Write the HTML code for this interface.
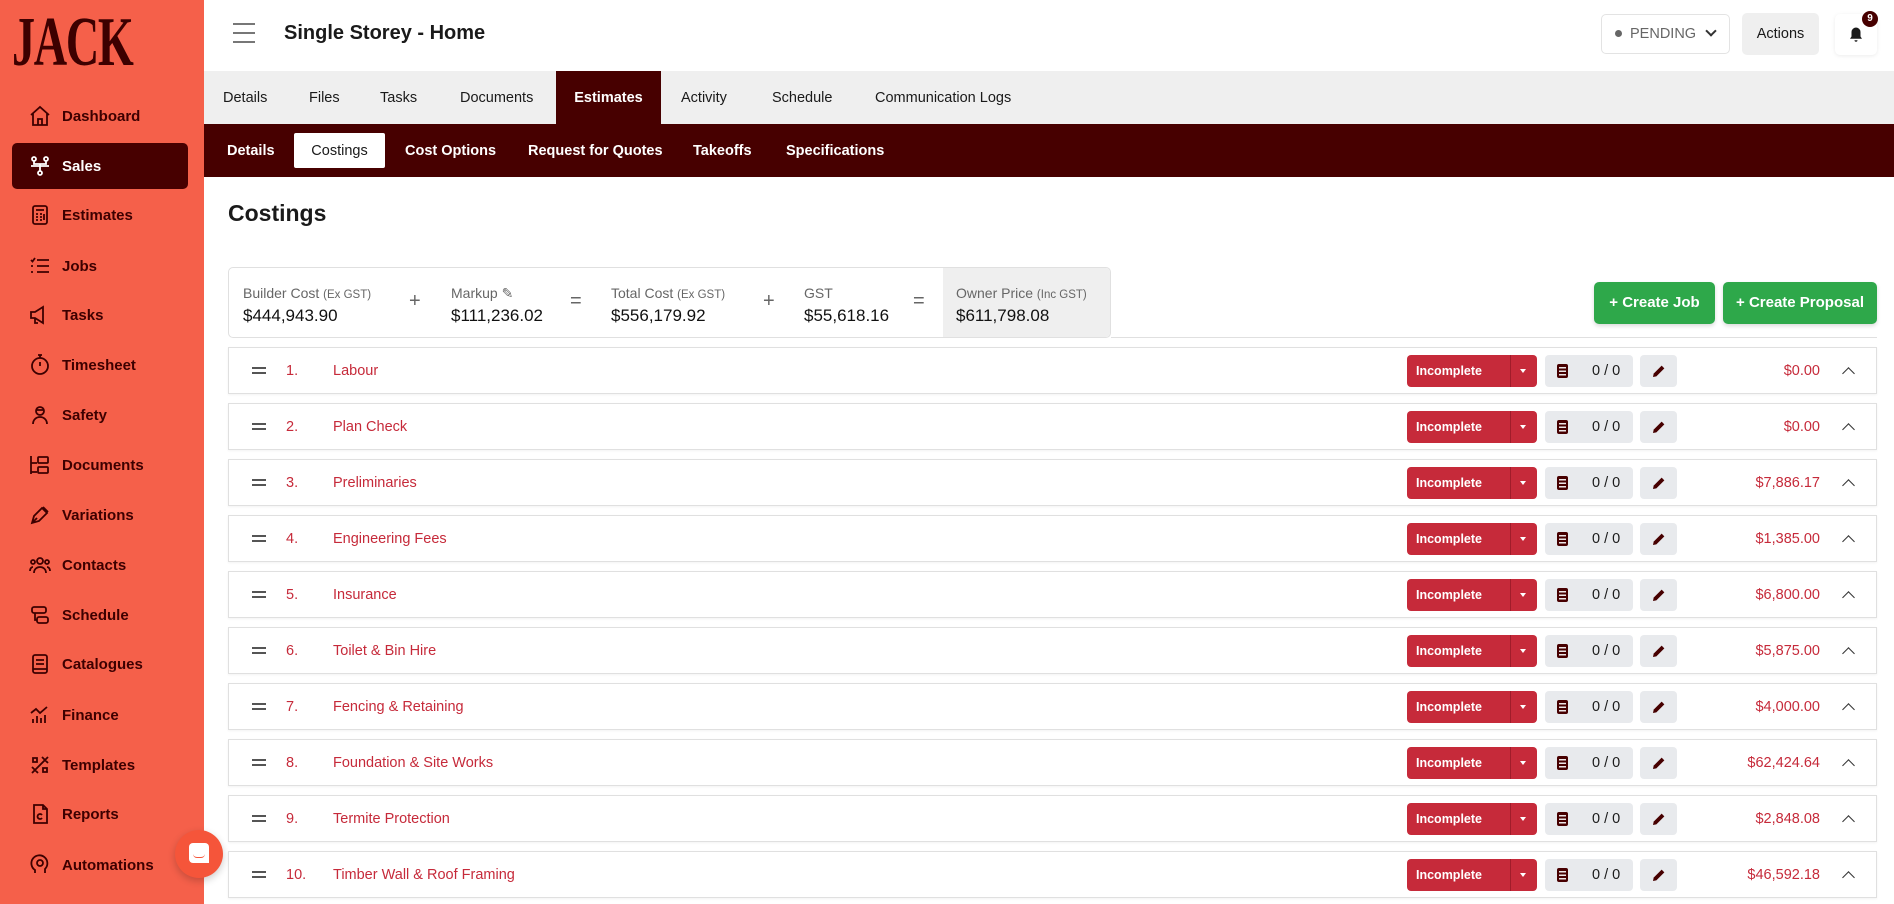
<!DOCTYPE html>
<html><head><meta charset="utf-8"><style>
*{box-sizing:border-box;margin:0;padding:0}
body{width:1894px;height:904px;overflow:hidden;font-family:"Liberation Sans",Arial,sans-serif;background:#fff;position:relative;color:#1a1a1a}
.sb{position:absolute;left:0;top:0;width:204px;height:904px;background:#f5604a}
.logo{position:absolute;left:12px;top:8px;font-family:"Liberation Serif",serif;font-size:70px;font-weight:bold;color:#3d0000;transform:scaleX(.66);transform-origin:left top;letter-spacing:-2px;line-height:70px}
.ni{position:absolute;left:12px;width:176px;height:46px;display:flex;align-items:center;font-size:15px;font-weight:bold;color:#3d0000}
.ni svg{position:absolute;left:16px;width:24px;height:24px;fill:none;stroke:#3d0000;stroke-width:1.8}
.ni span{position:absolute;left:50px}
.ni.act{background:#470000;color:#fff;border-radius:5px}
.ni.act svg{stroke:#fff}
.hdr{position:absolute;left:204px;top:0;right:0;height:71px;background:#fff}
.tabs{position:absolute;left:204px;top:71px;right:0;height:53px;background:#efefef}
.tab{position:absolute;top:1px;height:53px;line-height:53px;font-size:14.5px;color:#1a1a1a}
.sub{position:absolute;left:204px;top:124px;right:0;height:53px;background:#470000}
.st{position:absolute;top:1px;height:53px;line-height:53px;font-size:14.5px;font-weight:bold;color:#fff}
.sum{position:absolute;left:228px;top:267px;width:883px;height:71px;border:1px solid #e0e0e0;border-radius:5px;background:#fff;overflow:hidden}
.lab{position:absolute;top:17px;font-size:14px;color:#666}
.lab small{font-size:11.5px}
.val{position:absolute;top:38px;font-size:17px;color:#111}
.op{position:absolute;top:22px;font-size:20px;color:#666}
.gbtn{position:absolute;top:282px;height:42px;background:#2ea84a;color:#fff;border-radius:5px;font-size:15px;font-weight:bold;line-height:42px;text-align:center;box-shadow:0 2px 4px rgba(0,0,0,.15)}
.row{position:absolute;left:228px;width:1649px;height:47px;border:1px solid #e0e0e0;background:#fff;box-shadow:0 1px 2px rgba(0,0,0,.05)}
.row .h{position:absolute;left:23px;top:19px;width:14px;height:7px;border-top:2px solid #555;border-bottom:2px solid #555}
.row .n{position:absolute;left:57px;top:15px;font-size:14.5px;color:#c62a3a}
.row .t{position:absolute;left:104px;top:15px;font-size:14.5px;color:#c62a3a}
.inc{position:absolute;left:1178px;top:7px;width:130px;height:32px;background:#c62a3a;border-radius:4px;color:#fff;font-size:12.5px;font-weight:bold;line-height:32px;padding-left:9px}
.inc:after{content:"";position:absolute;left:103px;top:0;width:1px;height:32px;background:#a01c2a}
.inc i{position:absolute;left:113px;top:14px;border-left:3.5px solid transparent;border-right:3.5px solid transparent;border-top:4px solid #fff}
.cnt{position:absolute;left:1316px;top:7px;width:88px;height:32px;background:#e8eaed;border-radius:4px;font-size:14.5px;line-height:32px}
.cnt b{position:absolute;left:12px;top:9px;width:11px;height:14px;background:#470000;border-radius:2px}
.cnt b:before{content:"";position:absolute;left:2px;top:3px;width:7px;height:9px;background:repeating-linear-gradient(#fff 0 1.5px,transparent 1.5px 3.5px);opacity:.9}
.cnt span{position:absolute;left:47px}
.pen{position:absolute;left:1411px;top:7px;width:37px;height:32px;background:#e8eaed;border-radius:4px}
.amt{position:absolute;right:56px;top:15px;font-size:14.5px;color:#c62a3a}
.chev{position:absolute;right:23px;top:21px;width:9px;height:9px;border-left:1.3px solid #333;border-top:1.3px solid #333;transform:rotate(45deg)}
</style></head><body>
<div class="sb">
<div class="logo">JACK</div>
<div class="ni" style="top:93px"><svg viewBox="0 0 24 24"><path d="M3 11l9-8 9 8M5 9v12h14V9M10 21v-6h4v6"/></svg><span>Dashboard</span></div>
<div class="ni act" style="top:143px"><svg viewBox="0 0 24 24"><circle cx="6" cy="5" r="2"/><circle cx="18" cy="5" r="2"/><circle cx="12" cy="19" r="2"/><path d="M6 7v3h12V7M12 10v7M3 12h18"/></svg><span>Sales</span></div>
<div class="ni" style="top:192px"><svg viewBox="0 0 24 24"><rect x="5" y="3" width="14" height="18" rx="2"/><path d="M8 7h8M8 11h2M12 11h2M8 14h2M12 14h2M8 17h2M12 17h2M16 11v6"/></svg><span>Estimates</span></div>
<div class="ni" style="top:243px"><svg viewBox="0 0 24 24"><path d="M9 6h12M9 12h12M9 18h12M3 6l1.5 1.5L7 4M3 12h2M3 18h2"/></svg><span>Jobs</span></div>
<div class="ni" style="top:292px"><svg viewBox="0 0 24 24"><path d="M3 9v6h4l8 5V4L7 9H3zM7 15v5h3"/></svg><span>Tasks</span></div>
<div class="ni" style="top:342px"><svg viewBox="0 0 24 24"><circle cx="12" cy="13" r="8"/><path d="M12 9v4M10 2h4M12 2v3"/></svg><span>Timesheet</span></div>
<div class="ni" style="top:392px"><svg viewBox="0 0 24 24"><circle cx="12" cy="8" r="4"/><path d="M8 7h8M5 21c0-4 3-7 7-7s7 3 7 7"/></svg><span>Safety</span></div>
<div class="ni" style="top:442px"><svg viewBox="0 0 24 24"><path d="M3 3v18M3 10h6M3 19h6"/><rect x="10" y="4" width="10" height="6" rx="1"/><rect x="10" y="14" width="10" height="6" rx="1"/></svg><span>Documents</span></div>
<div class="ni" style="top:492px"><svg viewBox="0 0 24 24"><path d="M4 20l2-7 8-8 5 5-8 8zM4 20l5-5M15 4l5 5"/></svg><span>Variations</span></div>
<div class="ni" style="top:542px"><svg viewBox="0 0 24 24"><circle cx="12" cy="8" r="3"/><circle cx="5" cy="9" r="2"/><circle cx="19" cy="9" r="2"/><path d="M6 20c0-4 3-6 6-6s6 2 6 6M2 18c0-3 2-4 3-4M22 18c0-3-2-4-3-4"/></svg><span>Contacts</span></div>
<div class="ni" style="top:592px"><svg viewBox="0 0 24 24"><rect x="4" y="4" width="14" height="6" rx="2"/><rect x="9" y="14" width="11" height="6" rx="2"/><path d="M7 10v7h2"/></svg><span>Schedule</span></div>
<div class="ni" style="top:641px"><svg viewBox="0 0 24 24"><rect x="5" y="3" width="14" height="18" rx="2"/><path d="M8 8h8M8 12h8M5 17h14"/></svg><span>Catalogues</span></div>
<div class="ni" style="top:692px"><svg viewBox="0 0 24 24"><path d="M5 20v-4M9 20v-7M13 20v-5M17 20v-8M3 10l5-4 4 4 7-6"/></svg><span>Finance</span></div>
<div class="ni" style="top:742px"><svg viewBox="0 0 24 24"><path d="M4 20L20 4M5 5h4v4H5zM15 15h4v4h-4zM14 4l6 6M4 14l6 6"/></svg><span>Templates</span></div>
<div class="ni" style="top:791px"><svg viewBox="0 0 24 24"><path d="M6 3h9l4 4v14H6zM15 3v4h4"/><path d="M14 13a2.5 2.5 0 1 0 0 3"/></svg><span>Reports</span></div>
<div class="ni" style="top:842px"><svg viewBox="0 0 24 24"><path d="M7 20v-3a8 8 0 1 1 10-1v4"/><circle cx="12" cy="10" r="3"/></svg><span>Automations</span></div>
</div>
<div style="position:absolute;left:175px;top:830px;width:48px;height:48px;border-radius:50%;background:#f5553a;box-shadow:0 3px 8px rgba(0,0,0,.2)"><div style="position:absolute;left:14px;top:13px;width:20px;height:20px;background:#fff;border-radius:4px 4px 0 4px"></div><div style="position:absolute;left:18px;top:24px;width:12px;height:4px;border-bottom:1.5px solid #f5553a;border-radius:0 0 6px 6px"></div></div>
<div class="hdr">
<div style="position:absolute;left:29px;top:23px;width:22px;height:20px;border-top:2px solid #777;border-bottom:2px solid #777"><div style="margin-top:7px;height:2px;background:#777"></div></div>
<div style="position:absolute;left:80px;top:22px;font-size:20px;font-weight:bold;color:#1a1a1a">Single Storey - Home</div>
<div style="position:absolute;left:1397px;top:14px;width:129px;height:40px;border:1px solid #e3e3e3;border-radius:5px;font-size:14.5px;color:#666;line-height:38px"><span style="position:absolute;left:13px;top:15px;width:7px;height:7px;border-radius:50%;background:#666"></span><span style="position:absolute;left:28px">PENDING</span><span style="position:absolute;left:105px;top:12px;width:8px;height:8px;border-right:2px solid #333;border-bottom:2px solid #333;transform:rotate(45deg)"></span></div>
<div style="position:absolute;left:1538px;top:13px;width:77px;height:42px;background:#efefef;border-radius:5px;font-size:14.5px;line-height:42px;text-align:center;color:#1a1a1a">Actions</div>
<div style="position:absolute;left:1631px;top:14px;width:42px;height:41px;background:#fff;border-radius:5px;box-shadow:0 1px 4px rgba(0,0,0,.08)"><svg viewBox="0 0 24 24" width="18" height="20" style="position:absolute;left:12px;top:11px"><path d="M12 2a6 6 0 0 0-6 6v6l-2 3h16l-2-3V8a6 6 0 0 0-6-6zM10 19a2 2 0 0 0 4 0" fill="#1a1a1a"/></svg><div style="position:absolute;left:27px;top:-3px;width:16px;height:16px;border-radius:50%;background:#470000;color:#fff;font-size:10px;font-weight:bold;text-align:center;line-height:16px">9</div></div>
</div>
<div class="tabs">
<div class="tab" style="left:19px">Details</div><div class="tab" style="left:105px">Files</div><div class="tab" style="left:176px">Tasks</div><div class="tab" style="left:256px">Documents</div>
<div class="tab" style="left:352px;top:0;width:105px;background:#470000;color:#fff;font-weight:bold;text-align:center;line-height:55px">Estimates</div>
<div class="tab" style="left:477px">Activity</div><div class="tab" style="left:568px">Schedule</div><div class="tab" style="left:671px">Communication Logs</div>
</div>
<div class="sub">
<div class="st" style="left:23px">Details</div>
<div class="st" style="left:90px;top:9px;height:35px;line-height:36px;width:91px;background:#fff;color:#1a1a1a;font-weight:normal;text-align:center;border-radius:2px">Costings</div>
<div class="st" style="left:201px">Cost Options</div><div class="st" style="left:324px">Request for Quotes</div><div class="st" style="left:489px">Takeoffs</div><div class="st" style="left:582px">Specifications</div>
</div>
<div style="position:absolute;left:228px;top:200px;font-size:23px;font-weight:bold;color:#1a1a1a">Costings</div>
<div class="sum">
<div class="lab" style="left:14px">Builder Cost <small>(Ex GST)</small></div><div class="val" style="left:14px">$444,943.90</div>
<div class="op" style="left:180px">+</div>
<div class="lab" style="left:222px">Markup ✎</div><div class="val" style="left:222px">$111,236.02</div>
<div class="op" style="left:341px">=</div>
<div class="lab" style="left:382px">Total Cost <small>(Ex GST)</small></div><div class="val" style="left:382px">$556,179.92</div>
<div class="op" style="left:534px">+</div>
<div class="lab" style="left:575px">GST</div><div class="val" style="left:575px">$55,618.16</div>
<div class="op" style="left:684px">=</div>
<div style="position:absolute;left:714px;top:0;width:170px;height:71px;background:#efefef"></div>
<div class="lab" style="left:727px">Owner Price <small>(Inc GST)</small></div><div class="val" style="left:727px">$611,798.08</div>
</div>
<div style="position:absolute;left:1111px;top:337px;width:766px;height:1px;background:#e0e0e0"></div>
<div class="gbtn" style="left:1594px;width:121px">+ Create Job</div>
<div class="gbtn" style="left:1723px;width:154px">+ Create Proposal</div>
<div class="row" style="top:347px"><div class="h"></div><div class="n">1.</div><div class="t">Labour</div><div class="inc">Incomplete<i></i></div><div class="cnt"><b></b><span>0 / 0</span></div><div class="pen"><svg viewBox="0 0 24 24" width="16" height="16" style="position:absolute;left:11px;top:8px"><path d="M3 21l1-5L16 4l4 4L8 20z" fill="#470000"/></svg></div><div class="amt">$0.00</div><div class="chev"></div></div>
<div class="row" style="top:403px"><div class="h"></div><div class="n">2.</div><div class="t">Plan Check</div><div class="inc">Incomplete<i></i></div><div class="cnt"><b></b><span>0 / 0</span></div><div class="pen"><svg viewBox="0 0 24 24" width="16" height="16" style="position:absolute;left:11px;top:8px"><path d="M3 21l1-5L16 4l4 4L8 20z" fill="#470000"/></svg></div><div class="amt">$0.00</div><div class="chev"></div></div>
<div class="row" style="top:459px"><div class="h"></div><div class="n">3.</div><div class="t">Preliminaries</div><div class="inc">Incomplete<i></i></div><div class="cnt"><b></b><span>0 / 0</span></div><div class="pen"><svg viewBox="0 0 24 24" width="16" height="16" style="position:absolute;left:11px;top:8px"><path d="M3 21l1-5L16 4l4 4L8 20z" fill="#470000"/></svg></div><div class="amt">$7,886.17</div><div class="chev"></div></div>
<div class="row" style="top:515px"><div class="h"></div><div class="n">4.</div><div class="t">Engineering Fees</div><div class="inc">Incomplete<i></i></div><div class="cnt"><b></b><span>0 / 0</span></div><div class="pen"><svg viewBox="0 0 24 24" width="16" height="16" style="position:absolute;left:11px;top:8px"><path d="M3 21l1-5L16 4l4 4L8 20z" fill="#470000"/></svg></div><div class="amt">$1,385.00</div><div class="chev"></div></div>
<div class="row" style="top:571px"><div class="h"></div><div class="n">5.</div><div class="t">Insurance</div><div class="inc">Incomplete<i></i></div><div class="cnt"><b></b><span>0 / 0</span></div><div class="pen"><svg viewBox="0 0 24 24" width="16" height="16" style="position:absolute;left:11px;top:8px"><path d="M3 21l1-5L16 4l4 4L8 20z" fill="#470000"/></svg></div><div class="amt">$6,800.00</div><div class="chev"></div></div>
<div class="row" style="top:627px"><div class="h"></div><div class="n">6.</div><div class="t">Toilet &amp; Bin Hire</div><div class="inc">Incomplete<i></i></div><div class="cnt"><b></b><span>0 / 0</span></div><div class="pen"><svg viewBox="0 0 24 24" width="16" height="16" style="position:absolute;left:11px;top:8px"><path d="M3 21l1-5L16 4l4 4L8 20z" fill="#470000"/></svg></div><div class="amt">$5,875.00</div><div class="chev"></div></div>
<div class="row" style="top:683px"><div class="h"></div><div class="n">7.</div><div class="t">Fencing &amp; Retaining</div><div class="inc">Incomplete<i></i></div><div class="cnt"><b></b><span>0 / 0</span></div><div class="pen"><svg viewBox="0 0 24 24" width="16" height="16" style="position:absolute;left:11px;top:8px"><path d="M3 21l1-5L16 4l4 4L8 20z" fill="#470000"/></svg></div><div class="amt">$4,000.00</div><div class="chev"></div></div>
<div class="row" style="top:739px"><div class="h"></div><div class="n">8.</div><div class="t">Foundation &amp; Site Works</div><div class="inc">Incomplete<i></i></div><div class="cnt"><b></b><span>0 / 0</span></div><div class="pen"><svg viewBox="0 0 24 24" width="16" height="16" style="position:absolute;left:11px;top:8px"><path d="M3 21l1-5L16 4l4 4L8 20z" fill="#470000"/></svg></div><div class="amt">$62,424.64</div><div class="chev"></div></div>
<div class="row" style="top:795px"><div class="h"></div><div class="n">9.</div><div class="t">Termite Protection</div><div class="inc">Incomplete<i></i></div><div class="cnt"><b></b><span>0 / 0</span></div><div class="pen"><svg viewBox="0 0 24 24" width="16" height="16" style="position:absolute;left:11px;top:8px"><path d="M3 21l1-5L16 4l4 4L8 20z" fill="#470000"/></svg></div><div class="amt">$2,848.08</div><div class="chev"></div></div>
<div class="row" style="top:851px"><div class="h"></div><div class="n">10.</div><div class="t">Timber Wall &amp; Roof Framing</div><div class="inc">Incomplete<i></i></div><div class="cnt"><b></b><span>0 / 0</span></div><div class="pen"><svg viewBox="0 0 24 24" width="16" height="16" style="position:absolute;left:11px;top:8px"><path d="M3 21l1-5L16 4l4 4L8 20z" fill="#470000"/></svg></div><div class="amt">$46,592.18</div><div class="chev"></div></div>
</body></html>
